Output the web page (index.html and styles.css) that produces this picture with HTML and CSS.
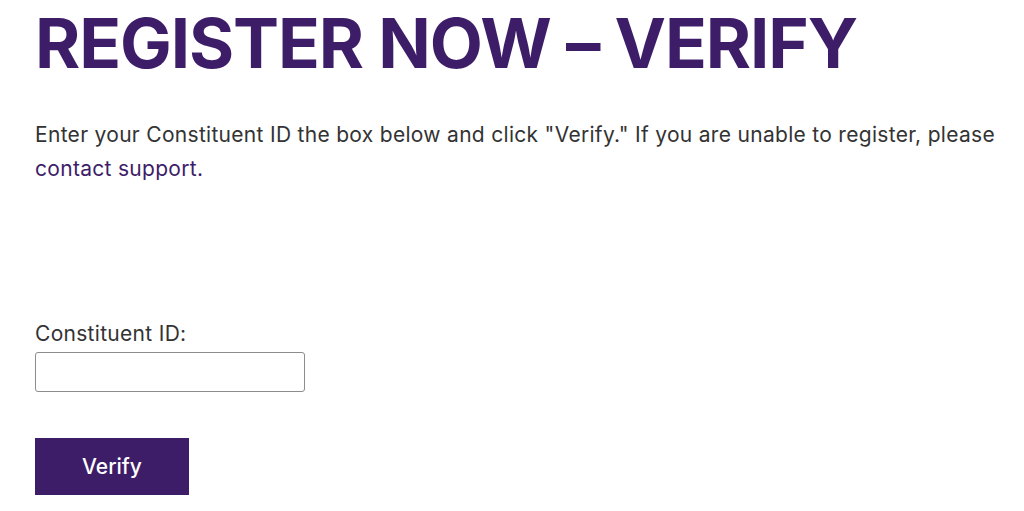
FILE: index.html
```html
<!DOCTYPE html>
<html lang="en">
<head>
<meta charset="utf-8">
<title>Register Now – Verify</title>
<link rel="stylesheet" href="styles.css">
</head>
<body>
<main class="page">
  <h1 class="title">REGISTER NOW – VERIFY</h1>
  <p class="intro">Enter your Constituent ID the box below and click "Verify." If you are unable to register, please <a class="link" href="#">contact support.</a></p>
  <form class="form">
    <label class="label" for="cid">Constituent ID:</label>
    <input class="input" id="cid" type="text">
    <button class="btn" type="button">Verify</button>
  </form>
</main>
</body>
</html>
```
FILE: styles.css
```css
html, body {
  margin: 0;
  padding: 0;
  background: #ffffff;
}
body {
  font-family: Inter, "Noto Sans", "Liberation Sans", sans-serif;
  color: #333333;
}
.page {
  padding: 0 0 0 35px;
}
.title {
  margin: 0;
  padding-top: 8px;
  font-size: 69px;
  line-height: 70px;
  font-weight: 700;
  color: #3d1d68;
  letter-spacing: -1.1px;
}
.intro {
  margin: 40px 0 0;
  font-size: 21px;
  line-height: 34px;
  letter-spacing: 0.3px;
  max-width: 975px;
}
.link {
  color: #3d1d68;
  text-decoration: none;
}
.form {
  display: flex;
  flex-direction: column;
  align-items: flex-start;
  margin-top: 134px;
}
.label {
  font-size: 21px;
  line-height: 28px;
  letter-spacing: 0.3px;
}
.input {
  margin-top: 4px;
  width: 270px;
  height: 40px;
  box-sizing: border-box;
  border: 1px solid #8c8c8c;
  border-radius: 3px;
  font: inherit;
}
.btn {
  margin-top: 46px;
  width: 154px;
  height: 57px;
  border: 0;
  background: #3d1d68;
  color: #ffffff;
  font-family: inherit;
  font-size: 21px;
  font-weight: 500;
}
```
